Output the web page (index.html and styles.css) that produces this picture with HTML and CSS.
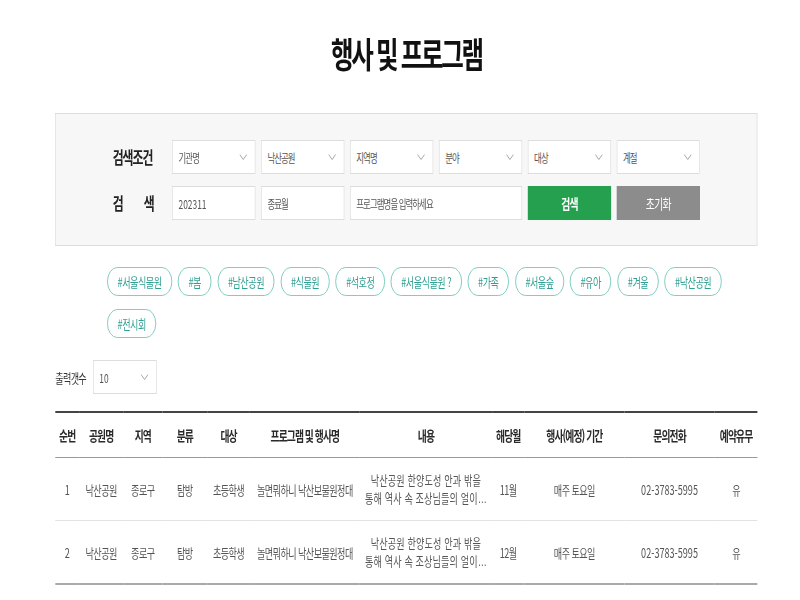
FILE: index.html
```html
<!DOCTYPE html>
<html lang="ko">
<head>
<meta charset="utf-8">
<title>행사 및 프로그램</title>
<link rel="stylesheet" href="styles.css">
</head>
<body>
<div class="frame">
<div class="page">
  <div class="wrap">
    <h1 class="title">행사 및 프로그램</h1>

    <div class="search">
      <div class="row">
        <div class="label">검색조건</div>
        <div class="select"><span>기관명</span><svg class="chev" width="11" height="6" viewBox="0 0 11 6"><polyline points="0.5,0.5 5.5,5.5 10.5,0.5" fill="none" stroke="#9a9a9a" stroke-width="1"/></svg></div>
        <div class="select"><span>낙산공원</span><svg class="chev" width="11" height="6" viewBox="0 0 11 6"><polyline points="0.5,0.5 5.5,5.5 10.5,0.5" fill="none" stroke="#9a9a9a" stroke-width="1"/></svg></div>
        <div class="select"><span>지역명</span><svg class="chev" width="11" height="6" viewBox="0 0 11 6"><polyline points="0.5,0.5 5.5,5.5 10.5,0.5" fill="none" stroke="#9a9a9a" stroke-width="1"/></svg></div>
        <div class="select"><span>분야</span><svg class="chev" width="11" height="6" viewBox="0 0 11 6"><polyline points="0.5,0.5 5.5,5.5 10.5,0.5" fill="none" stroke="#9a9a9a" stroke-width="1"/></svg></div>
        <div class="select"><span>대상</span><svg class="chev" width="11" height="6" viewBox="0 0 11 6"><polyline points="0.5,0.5 5.5,5.5 10.5,0.5" fill="none" stroke="#9a9a9a" stroke-width="1"/></svg></div>
        <div class="select"><span>계절</span><svg class="chev" width="11" height="6" viewBox="0 0 11 6"><polyline points="0.5,0.5 5.5,5.5 10.5,0.5" fill="none" stroke="#9a9a9a" stroke-width="1"/></svg></div>
      </div>
      <div class="row">
        <div class="label label-split"><span>검</span><span>색</span></div>
        <div class="input num">202311</div>
        <div class="input">종료월</div>
        <div class="input wide">프로그램명을 입력하세요</div>
        <button class="btn btn-green">검색</button>
        <button class="btn btn-gray">초기화</button>
      </div>
    </div>

    <ul class="tags">
      <li class="tag">#서울식물원</li>
      <li class="tag">#봄</li>
      <li class="tag">#남산공원</li>
      <li class="tag">#식물원</li>
      <li class="tag">#석호정</li>
      <li class="tag">#서울식물원 ?</li>
      <li class="tag">#가족</li>
      <li class="tag">#서울숲</li>
      <li class="tag">#유아</li>
      <li class="tag">#겨울</li>
      <li class="tag">#낙산공원</li>
      <li class="tag">#전시회</li>
    </ul>

    <div class="count">
      <span class="count-label">출력갯수</span>
      <div class="select select-small"><span class="num">10</span><svg class="chev" width="11" height="6" viewBox="0 0 11 6"><polyline points="0.5,0.5 5.5,5.5 10.5,0.5" fill="none" stroke="#9a9a9a" stroke-width="1"/></svg></div>
    </div>

    <table class="list">
      <colgroup>
        <col class="c1"><col class="c2"><col class="c3"><col class="c4"><col class="c5"><col class="c6"><col class="c7"><col class="c8"><col class="c9"><col class="c10"><col class="c11">
      </colgroup>
      <thead>
        <tr>
          <th>순번</th><th>공원명</th><th>지역</th><th>분류</th><th>대상</th><th>프로그램 및 행사명</th><th>내용</th><th>해당월</th><th>행사(예정) 기간</th><th>문의전화</th><th>예약유무</th>
        </tr>
      </thead>
      <tbody>
        <tr>
          <td class="num">1</td><td>낙산공원</td><td>종로구</td><td>탐방</td><td>초등학생</td><td>놀면뭐하니 낙산보물원정대</td>
          <td><div class="desc">낙산공원 한양도성 안과 밖을<br>통해 역사 속 조상님들의 얼이<span class="ell">…</span></div></td>
          <td>11월</td><td>매주 토요일</td><td class="num">02-3783-5995</td><td>유</td>
        </tr>
        <tr>
          <td class="num">2</td><td>낙산공원</td><td>종로구</td><td>탐방</td><td>초등학생</td><td>놀면뭐하니 낙산보물원정대</td>
          <td><div class="desc">낙산공원 한양도성 안과 밖을<br>통해 역사 속 조상님들의 얼이<span class="ell">…</span></div></td>
          <td>12월</td><td>매주 토요일</td><td class="num">02-3783-5995</td><td>유</td>
        </tr>
      </tbody>
    </table>
  </div>
</div>
</div>
</body>
</html>
```
FILE: styles.css
```css
html, body {
  margin: 0;
  padding: 0;
  background: #fff;
  overflow: hidden;
}
body {
  font-family: "Noto Sans CJK KR", "Noto Sans", sans-serif;
  color: #333;
}
.frame {
  width: 800px;
  overflow: hidden;
}
/* the design is laid out on a wide grid and condensed horizontally */
.page {
  width: 1142px;
  transform: scaleX(0.7);
  transform-origin: 0 0;
}
.wrap {
  width: 1003px;
  margin-left: 79px;
}
.title {
  margin: 0 0 40px;
  padding-top: 33px;
  height: 40px;
  line-height: 40px;
  text-align: center;
  font-size: 35px;
  font-weight: 700;
  letter-spacing: -3.3px;
  color: #111;
}
.search {
  border: 1px solid #ddd;
  background: #f7f7f7;
  padding: 26px 0 25px 81px;
  display: flex;
  flex-direction: column;
  gap: 12px;
}
.row {
  display: flex;
  align-items: center;
  gap: 8px;
}
.label {
  width: 60px;
  margin-right: 17px;
  font-size: 17px;
  font-weight: 700;
  letter-spacing: -1.5px;
  color: #222;
  line-height: 34px;
  white-space: nowrap;
}
.label-split {
  display: flex;
  justify-content: space-between;
  letter-spacing: 0;
}
.select, .input {
  box-sizing: border-box;
  width: 119px;
  height: 34px;
  border: 1px solid #ddd;
  background: #fff;
  display: flex;
  align-items: center;
  justify-content: space-between;
  padding: 0 11px 0 8px;
  font-size: 12px;
  letter-spacing: -1.3px;
  color: #555;
}
.input.wide {
  width: 246px;
}
.num {
  letter-spacing: 0;
}
.chev {
  flex: none;
}
.btn {
  box-sizing: border-box;
  width: 119px;
  height: 34px;
  border: 0;
  margin: 0;
  padding: 0;
  font-family: inherit;
  font-size: 14px;
  letter-spacing: -1px;
  color: #fff;
  cursor: pointer;
}
.btn-green {
  background: #24a04e;
  font-weight: 700;
}
.btn-gray {
  background: #8c8c8c;
}
.tags {
  list-style: none;
  margin: 21px 0 0;
  padding: 0 0 0 74px;
  display: flex;
  flex-wrap: wrap;
  gap: 13px 8.5px;
}
.tag {
  box-sizing: border-box;
  height: 29px;
  line-height: 27px;
  padding: 0 14px;
  border: 1px solid #6cc4b8;
  border-radius: 15px;
  font-size: 13px;
  letter-spacing: -0.7px;
  color: #2f9f92;
}
.count {
  margin-top: 22px;
  display: flex;
  align-items: center;
  gap: 10px;
}
.count-label {
  font-size: 13px;
  letter-spacing: -1px;
  color: #333;
}
.select-small {
  width: 91px;
}
.list {
  margin-top: 17px;
  width: 1003px;
  table-layout: fixed;
  border-collapse: collapse;
}
.c1 { width: 34px; }
.c2 { width: 63px; }
.c3 { width: 56px; }
.c4 { width: 64px; }
.c5 { width: 61px; }
.c6 { width: 157px; }
.c7 { width: 189px; }
.c8 { width: 46px; }
.c9 { width: 143px; }
.c10 { width: 129px; }
.c11 { width: 61px; }
.list th {
  height: 44px;
  padding: 0;
  border-top: 2px solid #444;
  border-bottom: 1px solid #999;
  font-size: 14px;
  font-weight: 700;
  letter-spacing: -1.3px;
  color: #2a2a2a;
  white-space: nowrap;
  text-align: center;
}
.list td {
  height: 62px;
  padding: 0;
  border-bottom: 1px solid #e2e2e2;
  font-size: 13px;
  letter-spacing: -0.8px;
  color: #555;
  text-align: center;
  white-space: nowrap;
}
.list td.num {
  letter-spacing: 0;
}
.list tbody tr:last-child td {
  border-bottom: 2px solid #aaa;
}
.desc {
  line-height: 18px;
  letter-spacing: 0.2px;
}
.ell {
  font-family: "Liberation Sans", sans-serif;
  letter-spacing: 0;
}
```
